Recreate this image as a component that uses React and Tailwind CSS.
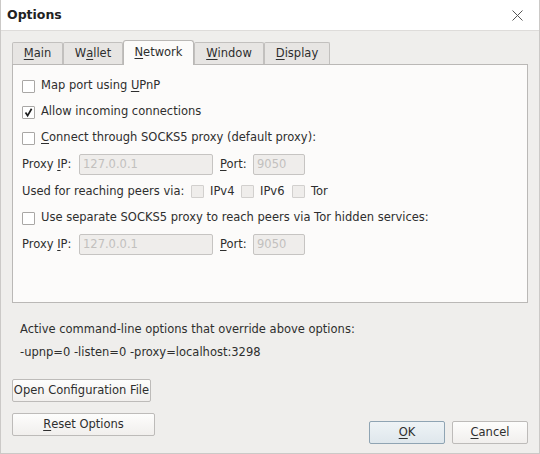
import { useState } from 'react';

/** Underlined mnemonic letter, as Qt draws it. */
function U({ children }) {
  return <span className="underline underline-offset-2 decoration-1">{children}</span>;
}

function CheckBox({ checked, disabled, onChange }) {
  return (
    <button
      type="button"
      disabled={disabled}
      onClick={onChange}
      className={`w-[13px] h-[13px] shrink-0 flex items-center justify-center rounded-[1px] border ${
        disabled ? 'bg-[#efedeb] border-[#d2d0ce]' : 'bg-white border-[#a9a7a5]'
      }`}
    >
      {checked && (
        <svg width="11" height="11" viewBox="0 0 11 11">
          <path d="M2.5 5.6 L4.6 8.6 L8.6 1.8" fill="none" stroke="#1e1e1e" strokeWidth="1.7" />
        </svg>
      )}
    </button>
  );
}

function CheckRow({ label, checked, onChange }) {
  return (
    <div className="h-[26px] flex items-center gap-[6px]">
      <CheckBox checked={checked} onChange={onChange} />
      <span>{label}</span>
    </div>
  );
}

function ProxyRow() {
  return (
    <div className="h-[27px] flex items-center">
      <span className="w-[57px]">
        Proxy <U>I</U>P:
      </span>
      <div className="w-[134px] h-[21px] border border-[#c6c4c2] rounded-[2px] bg-[#efedeb] pl-[3px] flex items-center text-[#c2c0be]">
        127.0.0.1
      </div>
      <span className="ml-[7px] w-[33px]">
        <U>P</U>ort:
      </span>
      <div className="w-[52px] h-[21px] border border-[#c6c4c2] rounded-[2px] bg-[#efedeb] pl-[3px] flex items-center text-[#c2c0be]">
        9050
      </div>
    </div>
  );
}

function Tab({ label, active, width }) {
  if (active) {
    return (
      <div
        className={`${width} h-[25px] bg-[#fcfbfa] border border-b-0 border-[#bab8b6] rounded-t-[3px] flex items-center justify-center`}
      >
        {label}
      </div>
    );
  }
  return (
    <div
      className={`${width} h-[22px] mb-px bg-[#e7e5e3] border border-b-0 border-[#c2c0be] rounded-t-[2px] flex items-center justify-center pt-px`}
    >
      {label}
    </div>
  );
}

function Button({ children, className = '', primary }) {
  return (
    <button
      type="button"
      className={`h-[23px] rounded-[2px] border flex items-center justify-center ${
        primary
          ? 'border-[#8fa4b3] bg-gradient-to-b from-[#eef3f6] to-[#dfe7ec]'
          : 'border-[#bdbbb9] bg-gradient-to-b from-[#fdfdfc] to-[#f1efed]'
      } ${className}`}
    >
      {children}
    </button>
  );
}

export default function App() {
  const [upnp, setUpnp] = useState(false);
  const [listen, setListen] = useState(true);
  const [socks, setSocks] = useState(false);
  const [tor, setTor] = useState(false);

  return (
    <div
      className="w-[540px] h-[454px] flex flex-col bg-[#efeeec] border-x border-b border-[#cbc9c7] text-[11.5px] text-[#2e2e2e] overflow-hidden"
      style={{ fontFamily: '"DejaVu Sans", Verdana, sans-serif' }}
    >
      <div className="h-[31px] shrink-0 bg-white border-b border-[#dedcda] flex items-center justify-between pl-[6px] pr-[15px]">
        <span className="text-[12.5px] font-bold text-[#222]">Options</span>
        <svg width="13" height="13" viewBox="0 0 13 13">
          <path d="M1.5 1.5 L11.5 11.5 M11.5 1.5 L1.5 11.5" stroke="#555" strokeWidth="1" />
        </svg>
      </div>

      <div className="flex-1 flex flex-col px-[11px] pt-[9px] pb-[10px]">
        <div className="flex items-end -mb-px relative z-10">
          <Tab width="w-[51px]" label={<><U>M</U>ain</>} />
          <Tab width="w-[60px]" label={<>W<U>a</U>llet</>} />
          <Tab width="w-[71px]" active label={<><U>N</U>etwork</>} />
          <Tab width="w-[70px]" label={<><U>W</U>indow</>} />
          <Tab width="w-[66px]" label={<><U>D</U>isplay</>} />
        </div>

        <div className="h-[239px] shrink-0 bg-[#fcfbfa] border border-[#bab8b6] pl-[9px] pt-[8px]">
          <CheckRow
            checked={upnp}
            onChange={() => setUpnp(!upnp)}
            label={<>Map port using <U>U</U>PnP</>}
          />
          <CheckRow
            checked={listen}
            onChange={() => setListen(!listen)}
            label="Allow incoming connections"
          />
          <CheckRow
            checked={socks}
            onChange={() => setSocks(!socks)}
            label={<><U>C</U>onnect through SOCKS5 proxy (default proxy):</>}
          />
          <ProxyRow />
          <div className="h-[27px] flex items-center">
            <span className="w-[169px]">Used for reaching peers via:</span>
            <CheckBox disabled />
            <span className="ml-[6px] w-[31px]">IPv4</span>
            <CheckBox disabled />
            <span className="ml-[6px] w-[32px]">IPv6</span>
            <CheckBox disabled />
            <span className="ml-[6px]">Tor</span>
          </div>
          <CheckRow
            checked={tor}
            onChange={() => setTor(!tor)}
            label="Use separate SOCKS5 proxy to reach peers via Tor hidden services:"
          />
          <ProxyRow />
        </div>

        <div className="mt-[15px] pl-[8px] leading-[23px]">
          <div>Active command-line options that override above options:</div>
          <div>-upnp=0 -listen=0 -proxy=localhost:3298</div>
        </div>

        <div className="mt-[15px] flex items-start justify-between">
          <div className="flex flex-col gap-[11px]">
            <Button className="w-[139px]">Open Configuration File</Button>
            <Button className="w-[143px]">
              <U>R</U>eset Options
            </Button>
          </div>
          <div className="flex gap-[7px] pt-[42px]">
            <Button primary className="w-[76px]">
              <U>O</U>K
            </Button>
            <Button className="w-[76px]">
              <U>C</U>ancel
            </Button>
          </div>
        </div>
      </div>
    </div>
  );
}
